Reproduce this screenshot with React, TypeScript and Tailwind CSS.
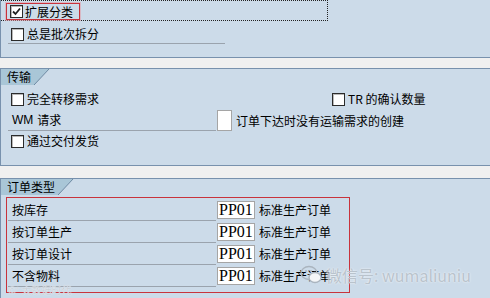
import React from "react";

const font = { fontFamily: '"Noto Sans CJK SC", "Liberation Sans", sans-serif' };

function Box({ checked = false }: { checked?: boolean }) {
  return (
    <div className="w-[13px] h-[13px] shrink-0 border border-[#2b2b2b] bg-white shadow-[inset_1px_1px_0_#b8b8b8] flex items-center justify-center">
      {checked && (
        <svg width="9" height="9" viewBox="0 0 9 9">
          <path d="M1 4.5 L3.5 7 L8 1.5" stroke="#222" strokeWidth="1.8" fill="none" />
        </svg>
      )}
    </div>
  );
}

function Tab({ label, w }: { label: string; w: number }) {
  return (
    <div className="flex h-[16px]">
      <div className="h-[16px] bg-[#a9c6d7] pl-[6px] text-[12px] leading-[16px] text-black whitespace-nowrap" style={{ width: w }}>
        {label}
      </div>
      <svg width="16" height="16" viewBox="0 0 16 16" className="block">
        <polygon points="0,0 15,0 0,16" fill="#a9c6d7" />
        <line x1="15" y1="0" x2="0" y2="16" stroke="#6f8aa3" strokeWidth="1" />
      </svg>
    </div>
  );
}

export default function App() {
  return (
    <div className="w-[490px] h-[298px] bg-[#f0f0f0] overflow-hidden relative text-[12px] text-black" style={font}>
      {/* Panel 1 */}
      <div className="h-[58px] bg-[#ccdbe9] border-l border-b border-[#7891ad]">
        <div className="h-[21px] w-[327px] border-t border-r border-b border-dotted border-[#222] relative">
          <div className="absolute left-[5px] top-[2px] h-[17px] w-[74px] border border-[#c8333c] shadow-[0_0_0_1px_rgba(230,150,160,0.5)] flex items-center">
            <div className="ml-[3px]"><Box checked /></div>
            <span className="ml-[2px] leading-[15px] whitespace-nowrap">扩展分类</span>
          </div>
        </div>
        <div className="ml-[7px] mt-[4px] w-[217px] h-[19px] border-b border-[#9aa3ad] flex items-center">
          <div className="ml-[3px]"><Box /></div>
          <span className="ml-[3px]">总是批次拆分</span>
        </div>
      </div>

      {/* Panel 2 */}
      <div className="mt-[10px] h-[98px] bg-[#ccdbe9] border-t border-l border-b border-[#7891ad]">
        <Tab label="传输" w={33} />
        <div className="flex items-center h-[16px] mt-[6px]">
          <div className="ml-[10px]"><Box /></div>
          <span className="ml-[3px] w-[305px]">完全转移需求</span>
          <Box />
          <span className="ml-[3px]">TR 的确认数量</span>
        </div>
        <div className="flex items-end h-[21px] mt-[3px]">
          <div className="ml-[7px] w-[208px] h-[21px] border-b border-[#9aa3ad] flex items-center">
            <span className="ml-[4px]" style={{ fontFamily: '"Liberation Sans", "Noto Sans CJK SC", sans-serif' }}>WM</span>
            <span className="ml-[4px]">请求</span>
          </div>
          <div className="ml-[1px] w-[15px] h-[21px] bg-white border border-[#a5a5a5]" />
          <span className="ml-[4px] self-center">订单下达时没有运输需求的创建</span>
        </div>
        <div className="flex items-center h-[16px] mt-[2px]">
          <div className="ml-[10px]"><Box /></div>
          <span className="ml-[3px]">通过交付发货</span>
        </div>
      </div>

      {/* Panel 3 */}
      <div className="mt-[12px] h-[130px] bg-[#ccdbe9] border-t border-l border-[#7891ad]">
        <Tab label="订单类型" w={57} />
        <div className="ml-[5px] mt-[2px] w-[344px] h-[96px] border border-[#c8333c] pt-[1px]">
          {["按库存", "按订单生产", "按订单设计", "不含物料"].map((t, i) => (
            <div key={i} className="flex items-center h-[22px]">
              <div className="ml-[1px] w-[208px] h-[22px] border-b border-[#9aa3ad] flex items-center">
                <span className="ml-[4px]">{t}</span>
              </div>
              <div
                className="ml-[1px] w-[38px] h-[18px] bg-white border border-[#a5a5a5] flex items-center pl-[1px] text-[16px] leading-[16px]"
                style={{ fontFamily: '"Liberation Serif", serif' }}
              >
                PP01
              </div>
              <span className="ml-[4px]">标准生产订单</span>
            </div>
          ))}
        </div>
      </div>

      {/* Watermarks */}
      <div className="absolute left-[300px] top-[265px] flex items-center gap-[4px] text-[16px] leading-[20px] text-[#b9c3cc] whitespace-nowrap" style={{ textShadow: "0 0 2px #fff" }}>
        <svg width="22" height="20" viewBox="0 0 22 20">
          <ellipse cx="9" cy="8" rx="8" ry="6.5" fill="none" stroke="#aab4be" strokeWidth="1.3" />
          <ellipse cx="15" cy="12.5" rx="6" ry="5" fill="#f4f6f8" stroke="#aab4be" strokeWidth="1.3" />
          <circle cx="6" cy="6" r="1" fill="#aab4be" />
          <circle cx="11" cy="6" r="1" fill="#aab4be" />
        </svg>
        <span>微信号: wumaliuniu</span>
      </div>
      <div className="absolute left-[8px] top-[284px] text-[10px] leading-[12px] text-[#c8d0d8] whitespace-nowrap" style={{ textShadow: "0 0 1px #fff" }}>
        ©⁺ 大数据时代
      </div>
    </div>
  );
}
